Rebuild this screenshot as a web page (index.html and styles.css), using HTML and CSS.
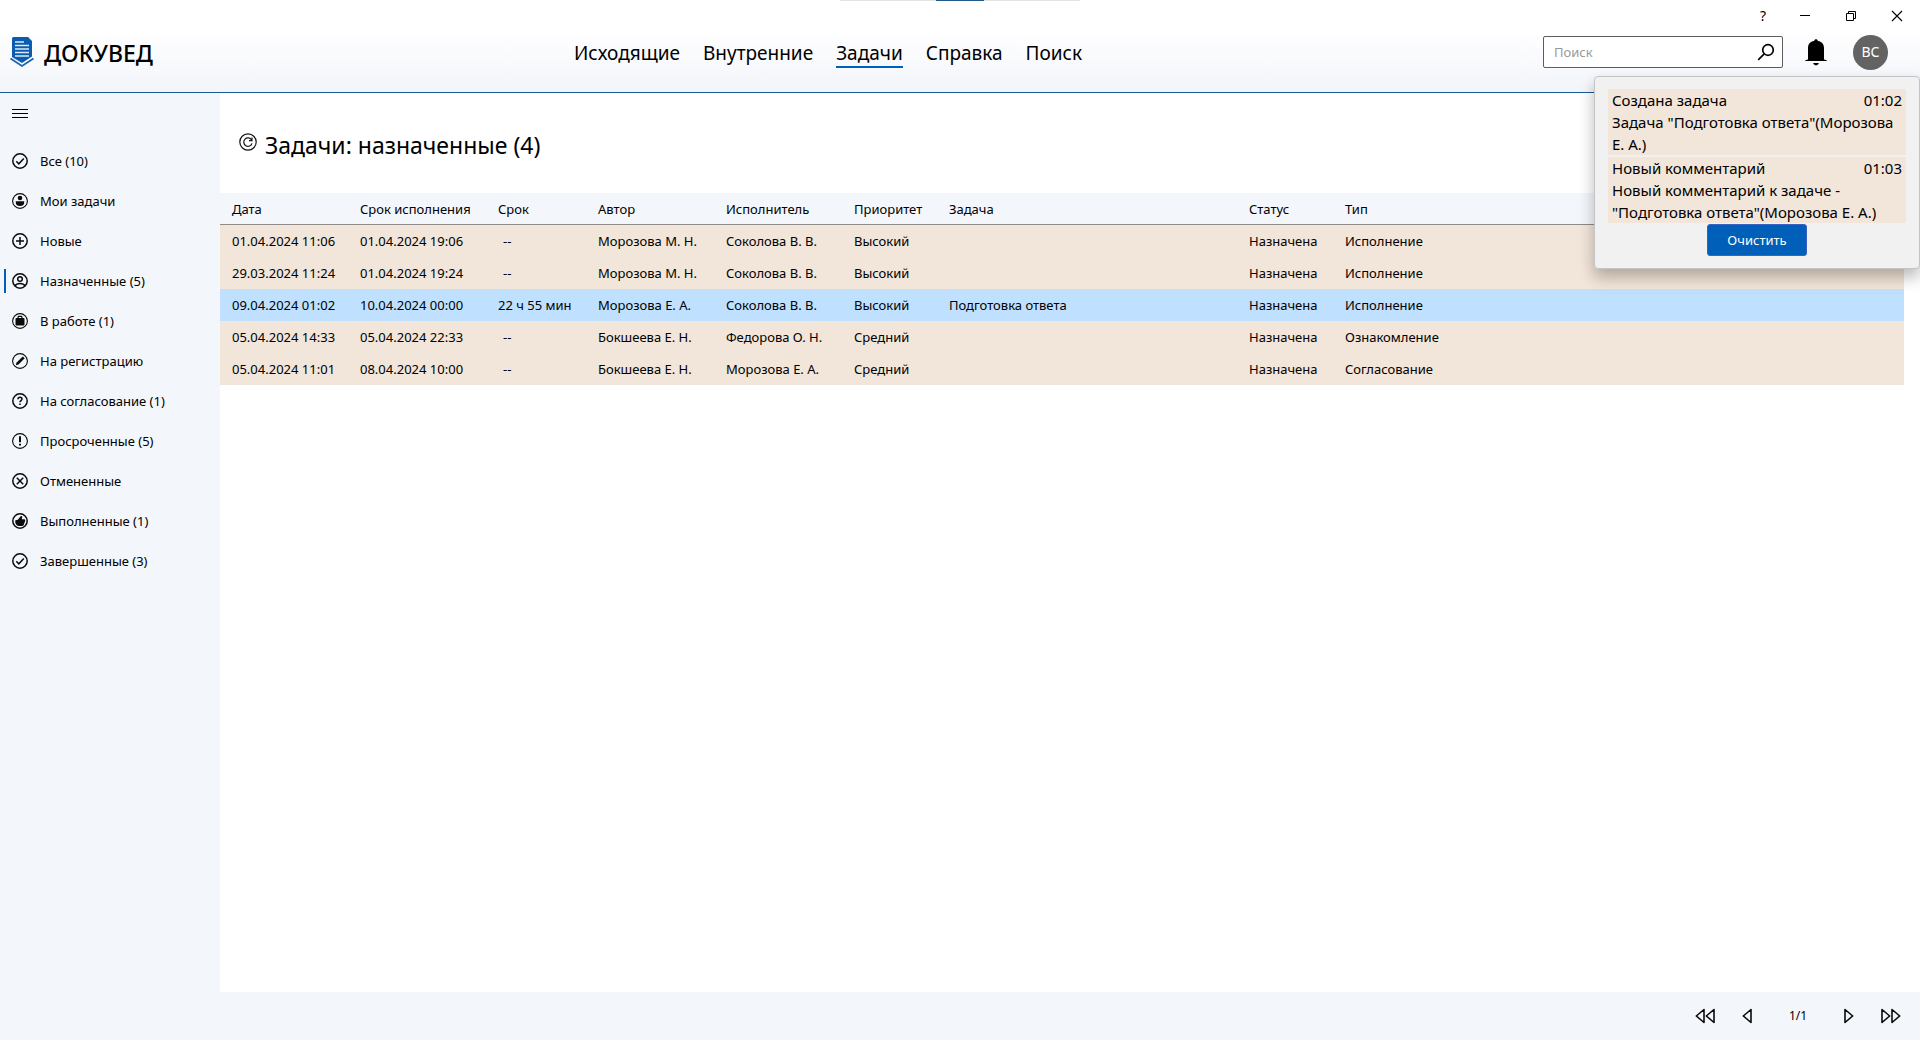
FILE: index.html
```html
<!DOCTYPE html>
<html lang="ru">
<head>
<meta charset="utf-8">
<meta name="viewport" content="width=device-width, initial-scale=1">
<title>ДОКУВЕД — Задачи</title>
<link rel="stylesheet" href="styles.css">
</head>
<body>
<div class="app">
  <header class="header">
    <div class="drag-strip"></div>
    <div class="window-controls">
      <button class="win-btn win-help" type="button" aria-label="Справка по окну">?</button>
      <button class="win-btn" type="button" aria-label="Свернуть"><svg width="12" height="12" viewBox="0 0 12 12"><path d="M1 5.500H11" stroke="#000"/></svg></button>
      <button class="win-btn" type="button" aria-label="Восстановить"><svg width="12" height="12" viewBox="0 0 12 12" fill="none" stroke="#000"><path d="M1.500 3.500h7v7h-7z"/><path d="M3.500 3.500v-2h7v7h-2"/></svg></button>
      <button class="win-btn" type="button" aria-label="Закрыть"><svg width="12" height="12" viewBox="0 0 12 12" stroke="#000" stroke-width="1.100"><path d="M1 1l10 10M11 1L1 11"/></svg></button>
    </div>
    <div class="toolbar">
      <a class="brand" href="#">
        <svg width="24" height="30" viewBox="0 0 24 30">
          <path d="M2 1.500Q2 0 3.500 0H18l4 4v15.500L12 26 2 20z" fill="#0a5cb0"/>
          <path d="M0.500 21.500L12 29l11.500-7.500" fill="none" stroke="#1d62ad" stroke-width="1.700"/>
          <path d="M5 5h9M5 8.500h14M5 12h14M5 15.500h14M5 19h14" stroke="#d9eaf8" stroke-width="1.500"/>
        </svg>
        <span class="brand-name">ДОКУВЕД</span>
      </a>
      <nav class="nav" aria-label="Разделы">
        <a class="nav-link" href="#">Исходящие</a>
        <a class="nav-link" href="#">Внутренние</a>
        <a class="nav-link nav-link-active" href="#" aria-current="page">Задачи</a>
        <a class="nav-link" href="#">Справка</a>
        <a class="nav-link" href="#">Поиск</a>
      </nav>
      <div class="tools">
        <form class="search">
          <input class="search-input" type="text" placeholder="Поиск" aria-label="Поиск">
          <button class="search-btn" type="button" aria-label="Найти"><svg width="18" height="18" viewBox="0 0 18 18" fill="none" stroke="#000" stroke-width="1.700"><circle cx="11" cy="7" r="5.300"/><path d="M7.200 10.800L1.200 16.800"/></svg></button>
        </form>
        <button class="bell" type="button" aria-label="Уведомления"><svg width="22" height="28" viewBox="0 0 22 28"><path d="M11 1.200c1 0 1.600.7 1.700 1.600C17 3.600 19 6.500 19 10v11.400l2.700.8V23H.3v-.8L3 21.400V10c0-3.500 2-6.400 6.300-7.200.1-.9.700-1.600 1.700-1.600z"/><path d="M8 25h6q-1 2.400-3 2.400T8 25z"/></svg></button>
        <button class="avatar" type="button" aria-label="Профиль">ВС</button>
      </div>
    </div>

    <section class="popup" aria-label="Уведомления">
      <ul class="notices">
        <li class="notice">
          <div class="notice-head"><span>Создана задача</span><time>01:02</time></div>
          <p class="notice-text">Задача "Подготовка ответа"(Морозова Е. А.)</p>
        </li>
        <li class="notice">
          <div class="notice-head"><span>Новый комментарий</span><time>01:03</time></div>
          <p class="notice-text">Новый комментарий к задаче - "Подготовка ответа"(Морозова Е. А.)</p>
        </li>
      </ul>
      <button class="clear-btn" type="button">Очистить</button>
    </section>
  </header>

  <aside class="sidebar">
    <button class="menu-btn" type="button" aria-label="Меню"><svg width="16" height="10" viewBox="0 0 16 10" stroke="#000"><path d="M0 1.500h16M0 5.500h16M0 9.500h16"/></svg></button>
    <nav class="side-nav" aria-label="Фильтры задач">
      <a class="side-link" href="#"><svg class="icon" viewBox="0 0 16 16"><circle cx="8" cy="8" r="7.200"/><path d="M4.300 8.300l2.500 2.500 5-5.300"/></svg>Все (10)</a>
      <a class="side-link" href="#"><svg class="icon" viewBox="0 0 16 16"><circle class="thin" cx="8" cy="8" r="7.400"/><circle class="solid" cx="8" cy="5" r="2.300"/><path class="solid" d="M3.800 8.300h8.400v1.400c0 2-1.700 3.300-4.200 3.300s-4.200-1.300-4.200-3.300z"/></svg>Мои задачи</a>
      <a class="side-link" href="#"><svg class="icon" viewBox="0 0 16 16"><circle cx="8" cy="8" r="7.200"/><path d="M8 4v8M4 8h8"/></svg>Новые</a>
      <a class="side-link side-link-active" href="#" aria-current="true"><svg class="icon" viewBox="0 0 16 16"><circle cx="8" cy="8" r="7.200"/><circle cx="8" cy="6" r="2.300"/><path d="M3 13c1-1.800 2.800-2.500 5-2.500s4 .7 5 2.500"/></svg>Назначенные (5)</a>
      <a class="side-link" href="#"><svg class="icon" viewBox="0 0 16 16"><circle class="thin" cx="8" cy="8" r="7.400"/><path class="solid" d="M5.500 5V4q0-1.200 1.200-1.200h2.600q1.200 0 1.200 1.200v1h1q1 0 1 1v5.500q0 1-1 1h-7q-1 0-1-1V6q0-1 1-1zM6.700 5h2.600v-.9H6.700z" fill-rule="evenodd"/></svg>В работе (1)</a>
      <a class="side-link" href="#"><svg class="icon" viewBox="0 0 16 16"><circle class="thin" cx="8" cy="8" r="7.400"/><path class="solid" d="M3.800 12.200l.8-2.800 6.200-6 1.900 1.900-6.200 6.100z"/></svg>На регистрацию</a>
      <a class="side-link" href="#"><svg class="icon" viewBox="0 0 16 16"><circle cx="8" cy="8" r="7.200"/><path d="M6 6.300C6 5 6.800 4.300 8 4.300s2 .7 2 1.800c0 1.400-2 1.600-2 3.100M8 10.600v1.500"/></svg>На согласование (1)</a>
      <a class="side-link" href="#"><svg class="icon" viewBox="0 0 16 16"><circle class="thin" cx="8" cy="8" r="7.400"/><path class="bold" d="M8 3.300v6M8 10.800v1.700"/></svg>Просроченные (5)</a>
      <a class="side-link" href="#"><svg class="icon" viewBox="0 0 16 16"><circle cx="8" cy="8" r="7.200"/><path d="M4.800 4.800l6.400 6.400M11.200 4.800l-6.400 6.400"/></svg>Отмененные</a>
      <a class="side-link" href="#"><svg class="icon" viewBox="0 0 16 16"><circle cx="8" cy="8" r="7.200"/><path class="solid" d="M3.300 7.300l2.500-.6L8.900 3c1-.3 1.600.6 1.300 1.500L9.700 6.200h2.500c1 0 1.300.8 1 1.600l-1.400 3.900c-.3.800-.9 1.200-1.700 1.200H7c-1.800 0-3.500-1.800-3.700-3.500z"/></svg>Выполненные (1)</a>
      <a class="side-link" href="#"><svg class="icon" viewBox="0 0 16 16"><circle cx="8" cy="8" r="7.200"/><path d="M4.300 8.300l2.500 2.500 5-5.300"/></svg>Завершенные (3)</a>
    </nav>
  </aside>

  <main class="main">
    <div class="title-row">
      <button class="refresh" type="button" aria-label="Обновить"><svg width="18" height="18" viewBox="0 0 18 18" fill="none" stroke="#111" stroke-width="1.200"><circle cx="9" cy="9" r="8.200"/><path d="M12.600 7A4.200 4.200 0 1 0 13 10.300M13 4.600v3h-3"/></svg></button>
      <h1 class="title">Задачи: назначенные (4)</h1>
    </div>
    <div class="table-wrap">
      <table class="tasks">
        <colgroup><col class="c-date"><col class="c-due"><col class="c-left"><col class="c-person"><col class="c-person"><col class="c-priority"><col class="c-task"><col class="c-status"><col></colgroup>
        <thead>
          <tr><th>Дата</th><th>Срок исполнения</th><th>Срок</th><th>Автор</th><th>Исполнитель</th><th>Приоритет</th><th>Задача</th><th>Статус</th><th>Тип</th></tr>
        </thead>
        <tbody>
          <tr><td>01.04.2024 11:06</td><td>01.04.2024 19:06</td><td class="none">--</td><td>Морозова М. Н.</td><td>Соколова В. В.</td><td>Высокий</td><td></td><td>Назначена</td><td>Исполнение</td></tr>
          <tr><td>29.03.2024 11:24</td><td>01.04.2024 19:24</td><td class="none">--</td><td>Морозова М. Н.</td><td>Соколова В. В.</td><td>Высокий</td><td></td><td>Назначена</td><td>Исполнение</td></tr>
          <tr class="selected"><td>09.04.2024 01:02</td><td>10.04.2024 00:00</td><td>22 ч 55 мин</td><td>Морозова Е. А.</td><td>Соколова В. В.</td><td>Высокий</td><td>Подготовка ответа</td><td>Назначена</td><td>Исполнение</td></tr>
          <tr><td>05.04.2024 14:33</td><td>05.04.2024 22:33</td><td class="none">--</td><td>Бокшеева Е. Н.</td><td>Федорова О. Н.</td><td>Средний</td><td></td><td>Назначена</td><td>Ознакомление</td></tr>
          <tr><td>05.04.2024 11:01</td><td>08.04.2024 10:00</td><td class="none">--</td><td>Бокшеева Е. Н.</td><td>Морозова Е. А.</td><td>Средний</td><td></td><td>Назначена</td><td>Согласование</td></tr>
        </tbody>
      </table>
    </div>
  </main>

  <footer class="pager">
    <button class="page-btn" type="button" aria-label="Первая страница"><svg width="20" height="16" viewBox="0 0 20 16"><path d="M9 1.500v13L1.300 8zM19 1.500v13L11.300 8z"/></svg></button>
    <button class="page-btn" type="button" aria-label="Предыдущая страница"><svg width="10" height="16" viewBox="0 0 10 16"><path d="M9 1.500v13L1.300 8z"/></svg></button>
    <span class="page-num">1/1</span>
    <button class="page-btn" type="button" aria-label="Следующая страница"><svg width="10" height="16" viewBox="0 0 10 16"><path d="M1 1.500v13L8.700 8z"/></svg></button>
    <button class="page-btn" type="button" aria-label="Последняя страница"><svg width="20" height="16" viewBox="0 0 20 16"><path d="M1 1.500v13L8.700 8zM11 1.500v13L18.700 8z"/></svg></button>
  </footer>
</div>
</body>
</html>
```
FILE: styles.css
```css
* {
  box-sizing: border-box;
}

body {
  margin: 0;
  font: 13px/20px "Noto Sans", "Open Sans", sans-serif;
  color: #000;
  background: #f3f6fb;
}

button {
  display: flex;
  align-items: center;
  justify-content: center;
  padding: 0;
  border: 0;
  background: none;
  font: inherit;
  color: inherit;
}

a {
  color: inherit;
  text-decoration: none;
}

.app {
  display: grid;
  grid-template: auto 1fr 48px / 220px minmax(0, 1fr);
  min-height: 100vh;
}

/* Header */
.header {
  position: relative;
  grid-column: 1 / -1;
  padding-bottom: 20px;
  border-bottom: 1px solid #1c5a96;
  background: linear-gradient(#fff 32%, #f2f5fa);
}

.drag-strip {
  position: absolute;
  top: 0;
  left: calc(50% - 120px);
  width: 240px;
  height: 1px;
  background: linear-gradient(90deg, #e3e3e3 40%, #235789 40% 60%, #e3e3e3 60%);
}

.window-controls {
  display: flex;
  justify-content: flex-end;
  height: 32px;
}

.win-btn {
  width: 46px;
}

.win-help {
  width: 38px;
  font-size: 14px;
}

.toolbar {
  display: grid;
  grid-template-columns: 574px auto 1fr;
  align-items: center;
  height: 40px;
}

.brand {
  display: flex;
  align-items: center;
  gap: 10px;
  padding-left: 10px;
}

.brand-name {
  padding-top: 2px;
  font-size: 23px;
  line-height: 32px;
  font-weight: 500;
}

.nav {
  display: flex;
  gap: 23px;
  padding-top: 4px;
}

.nav-link {
  border-bottom: 2px solid transparent;
  font-size: 19px;
  line-height: 26px;
}

.nav-link-active {
  border-color: #005fb8;
}

.tools {
  display: flex;
  align-items: center;
  justify-content: flex-end;
  padding-right: 32px;
}

.search {
  display: flex;
  width: 240px;
  height: 32px;
  border: 1px solid #5c5c5c;
  border-radius: 2px;
  background: #fff;
}

.search-input {
  flex: 1;
  min-width: 0;
  padding: 0 10px;
  border: 0;
  background: none;
  font: inherit;
  outline: 0;
}

.search-input::placeholder {
  color: #999;
}

.search-btn {
  width: 32px;
}

.bell {
  width: 22px;
  margin: 0 26px 0 22px;
}

.avatar {
  width: 35px;
  height: 35px;
  border-radius: 50%;
  background: #636363;
  color: #fff;
  font-size: 14px;
}

/* Notification popup */
.popup {
  position: absolute;
  z-index: 1;
  top: 76px;
  right: 0;
  display: flex;
  flex-direction: column;
  align-items: center;
  width: 326px;
  padding: 12px 13px;
  border: 1px solid #c4c4c6;
  border-radius: 4px;
  background: #f1f1f1;
  box-shadow: 0 8px 16px rgba(0, 0, 0, .28);
}

.notices {
  display: grid;
  gap: 2px;
  width: 100%;
  margin: 0 0 1px;
  padding: 0;
  list-style: none;
}

.notice {
  padding: 0 4px;
  background: #f2e5d9;
  font-size: 15px;
  line-height: 22px;
}

.notice-head {
  display: flex;
  justify-content: space-between;
}

.notice-text {
  margin: 0;
}

.clear-btn {
  width: 100px;
  height: 32px;
  border: 1px solid #3a62c4;
  border-radius: 3px;
  background: #005fb8;
  color: #fff;
}

/* Sidebar */
.menu-btn {
  width: 40px;
  height: 40px;
}

.side-nav {
  display: flex;
  flex-direction: column;
  padding-top: 8px;
}

.side-link {
  position: relative;
  display: flex;
  align-items: center;
  gap: 12px;
  height: 40px;
  padding-left: 12px;
}

.side-link-active::before {
  content: "";
  position: absolute;
  top: 8px;
  left: 4px;
  width: 2px;
  height: 24px;
  background: #005fb8;
}

.icon {
  width: 16px;
  height: 16px;
  fill: none;
  stroke: #0a0a0a;
  stroke-width: 1.5px;
}

.icon .thin {
  stroke-width: 1.1px;
}

.icon .bold {
  stroke-width: 2px;
}

.icon .solid {
  fill: #0a0a0a;
  stroke: none;
}

/* Task list */
.main {
  background: #fff;
}

.title-row {
  display: flex;
  align-items: center;
  gap: 8px;
  height: 100px;
  padding-left: 19px;
}

.refresh {
  width: 18px;
  height: 24px;
  padding-bottom: 2px;
}

.title {
  margin: 0;
  padding-top: 3px;
  font-size: 23px;
  line-height: 32px;
  font-weight: 400;
}

.table-wrap {
  padding-right: 16px;
}

.tasks {
  width: 100%;
  border-collapse: separate;
  border-spacing: 0;
  table-layout: fixed;
}

.tasks th,
.tasks td {
  height: 32px;
  padding: 0 0 0 12px;
  font-weight: 400;
  text-align: left;
  white-space: nowrap;
}

.tasks thead {
  background: #f3f6fb;
}

.tasks th {
  border-bottom: 1px solid #8f8b88;
}

.tasks tbody tr {
  background: #f2e5d9;
}

.tasks tbody .selected {
  background: #bfe1ff;
}

.tasks .none {
  padding-left: 17px;
}

.c-date,
.c-person {
  width: 128px;
}

.c-due {
  width: 138px;
}

.c-left {
  width: 100px;
}

.c-priority {
  width: 95px;
}

.c-task {
  width: 300px;
}

.c-status {
  width: 96px;
}

/* Pager */
.pager {
  grid-column: 1 / -1;
  display: flex;
  align-items: center;
  justify-content: flex-end;
  padding-right: 8px;
}

.page-btn {
  width: 42px;
  height: 32px;
}

.page-btn svg {
  fill: none;
  stroke: #0a0a0a;
  stroke-width: 1.6px;
  stroke-linejoin: round;
}

.page-num {
  width: 60px;
  font-size: 12px;
  text-align: center;
}
```
